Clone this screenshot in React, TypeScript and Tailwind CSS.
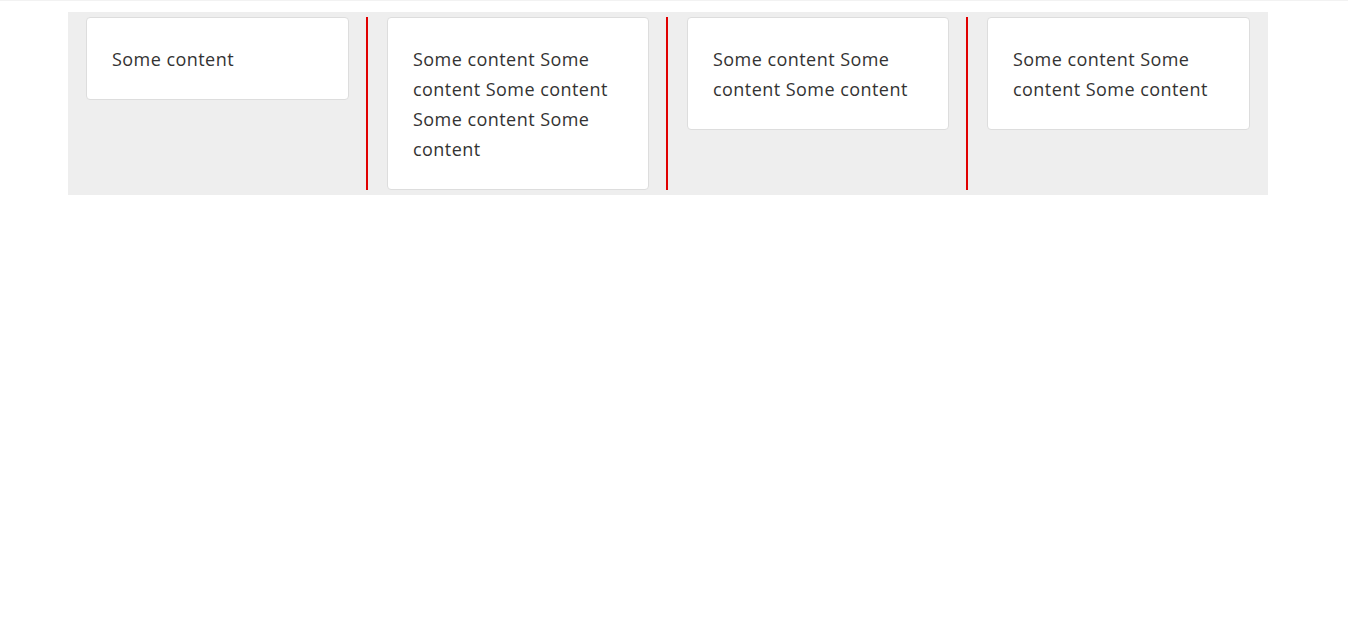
import React from 'react';

const items = [
  'Some content',
  'Some content Some content Some content Some content Some content',
  'Some content Some content Some content',
  'Some content Some content Some content',
];

export default function App() {
  return (
    <div className="min-h-screen bg-white" style={{ fontFamily: '"Open Sans", "Noto Sans", sans-serif' }}>
      <div className="h-px bg-[#f2f2f2]" />
      <div className="ml-[68px] mt-[11px] flex w-[1200px] bg-[#eeeeee]">
        {items.map((text, i) => (
          <div
            key={i}
            className={`my-[5px] w-[300px] ${i === 0 ? 'pl-[18px]' : 'pl-[19px]'} ${
              i < 3 ? 'border-r-2 border-[#e00000] pr-[17px]' : 'pr-[18px]'
            }`}
          >
            <div className="rounded-[4px] border border-[#dddddd] bg-white px-[25px] pt-[26px] pb-[25px] text-[18px] leading-[30px] tracking-[0.45px] text-[#333333]">
              {text}
            </div>
          </div>
        ))}
      </div>
    </div>
  );
}
